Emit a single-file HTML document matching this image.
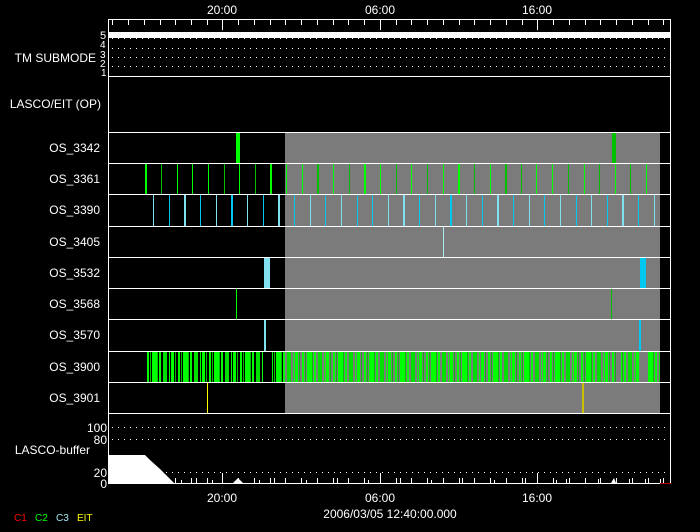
<!DOCTYPE html>
<html><head><meta charset="utf-8"><style>
html,body{margin:0;padding:0;background:#000;width:700px;height:532px;overflow:hidden}
svg{display:block}
text{font-family:"Liberation Sans",sans-serif;fill:#fff;font-size:11px}
</style></head><body>
<svg width="700" height="532" viewBox="0 0 700 532" xmlns="http://www.w3.org/2000/svg">
<defs>
<pattern id="g3900" x="147" y="0" width="31" height="10" patternUnits="userSpaceOnUse">
<rect x="0" y="0" width="2" height="10" fill="#00ff00"/>
<rect x="3" y="0" width="1" height="10" fill="#00c000"/>
<rect x="5" y="0" width="5" height="10" fill="#00ff00"/>
<rect x="10" y="0" width="1" height="10" fill="#00c000"/>
<rect x="12" y="0" width="2" height="10" fill="#00ff00"/>
<rect x="16" y="0" width="4" height="10" fill="#00e000"/>
<rect x="22" y="0" width="1" height="10" fill="#00ff00"/>
<rect x="24" y="0" width="3" height="10" fill="#00ff00"/>
<rect x="28" y="0" width="1" height="10" fill="#00c000"/>
</pattern>
</defs>

<!-- gray region -->
<rect x="285" y="132" width="375" height="281" fill="#7b7b7b"/>

<!-- submode -->
<rect x="108" y="32" width="563" height="6" fill="#fff"/>
<g stroke="#fff" stroke-width="1" stroke-dasharray="1 5">
<path d="M112 38.5H670M112 48.5H670M112 57.5H670M112 66.5H670M112 427.5H670M112 439.5H670M112 472.5H670"/>
</g>

<!-- OS_3342 -->
<rect x="236" y="132" width="4" height="31" fill="#00ff00"/>
<rect x="612" y="132" width="4" height="31" fill="#00c000"/>

<!-- OS_3361 -->
<g fill="#00ff00">
<rect x="145" y="163" width="2" height="31"/><rect x="161" y="163" width="1" height="31" fill="#00c000"/><rect x="177" y="163" width="1" height="31"/><rect x="192" y="163" width="1" height="31"/><rect x="208" y="163" width="1" height="31"/><rect x="224" y="163" width="1" height="31" fill="#00c000"/><rect x="239" y="163" width="1" height="31"/><rect x="255" y="163" width="1" height="31" fill="#00c000"/><rect x="270" y="163" width="2" height="31"/><rect x="286" y="163" width="1" height="31"/><rect x="302" y="163" width="1" height="31"/><rect x="317" y="163" width="2" height="31" fill="#00c000"/><rect x="333" y="163" width="1" height="31"/><rect x="349" y="163" width="1" height="31" fill="#00c000"/><rect x="364" y="163" width="2" height="31"/><rect x="380" y="163" width="1" height="31"/><rect x="396" y="163" width="1" height="31" fill="#00c000"/><rect x="411" y="163" width="1" height="31"/><rect x="427" y="163" width="1" height="31" fill="#00c000"/><rect x="443" y="163" width="1" height="31"/><rect x="458" y="163" width="2" height="31"/><rect x="474" y="163" width="1" height="31" fill="#00c000"/><rect x="490" y="163" width="1" height="31"/><rect x="505" y="163" width="2" height="31" fill="#00c000"/><rect x="552" y="163" width="1" height="31"/><rect x="568" y="163" width="1" height="31" fill="#00c000"/><rect x="584" y="163" width="1" height="31"/><rect x="599" y="163" width="1" height="31" fill="#00c000"/><rect x="615" y="163" width="1" height="31"/><rect x="630" y="163" width="1" height="31" fill="#00c000"/><rect x="646" y="163" width="1" height="31"/><rect x="536" y="163" width="1" height="31"/><rect x="521" y="163" width="1" height="31" fill="#00c000"/>
</g>

<!-- OS_3390 -->
<g fill="#80e0f0">
<rect x="153" y="194" width="1" height="32"/><rect x="169" y="194" width="1" height="32" fill="#00c8f0"/><rect x="184" y="194" width="2" height="32"/><rect x="200" y="194" width="1" height="32" fill="#00c8f0"/><rect x="216" y="194" width="1" height="32"/><rect x="231" y="194" width="2" height="32" fill="#00c8f0"/><rect x="247" y="194" width="1" height="32"/><rect x="263" y="194" width="1" height="32" fill="#00c8f0"/><rect x="278" y="194" width="2" height="32"/><rect x="294" y="194" width="1" height="32" fill="#00c8f0"/><rect x="310" y="194" width="1" height="32"/><rect x="325" y="194" width="1" height="32" fill="#00c8f0"/><rect x="341" y="194" width="1" height="32"/><rect x="357" y="194" width="1" height="32" fill="#00c8f0"/><rect x="403" y="194" width="2" height="32"/><rect x="419" y="194" width="1" height="32" fill="#00c8f0"/><rect x="435" y="194" width="1" height="32"/><rect x="450" y="194" width="2" height="32" fill="#00c8f0"/><rect x="466" y="194" width="1" height="32"/><rect x="482" y="194" width="1" height="32" fill="#00c8f0"/><rect x="497" y="194" width="2" height="32"/><rect x="513" y="194" width="1" height="32" fill="#00c8f0"/><rect x="529" y="194" width="1" height="32"/><rect x="544" y="194" width="1" height="32" fill="#00c8f0"/><rect x="560" y="194" width="1" height="32"/><rect x="576" y="194" width="1" height="32" fill="#00c8f0"/><rect x="591" y="194" width="1" height="32"/><rect x="607" y="194" width="1" height="32" fill="#00c8f0"/><rect x="622" y="194" width="2" height="32"/><rect x="638" y="194" width="1" height="32" fill="#00c8f0"/><rect x="654" y="194" width="1" height="32"/><rect x="372" y="194" width="1" height="32" fill="#00c8f0"/><rect x="388" y="194" width="1" height="32"/>
</g>

<!-- OS_3405 -->
<rect x="443" y="226" width="1" height="31" fill="#b0e8f0"/>
<!-- OS_3532 -->
<rect x="264" y="257" width="6" height="31" fill="#80e0f0"/>
<rect x="640" y="257" width="6" height="31" fill="#00c8f0"/>
<!-- OS_3568 -->
<rect x="236" y="288" width="1" height="31" fill="#00ff00"/>
<rect x="611" y="288" width="1" height="31" fill="#00c000"/>
<!-- OS_3570 -->
<rect x="264" y="319" width="2" height="32" fill="#80e0f0"/>
<rect x="639" y="319" width="2" height="32" fill="#00c8f0"/>
<!-- OS_3900 -->
<rect x="147" y="351" width="116" height="31" fill="url(#g3900)"/>
<rect x="272" y="351" width="345" height="31" fill="url(#g3900)"/>
<rect x="621" y="351" width="18" height="31" fill="url(#g3900)"/>
<rect x="648" y="351" width="12" height="31" fill="url(#g3900)"/>
<!-- OS_3901 -->
<rect x="207" y="382" width="1" height="31" fill="#ffff00"/>
<rect x="582" y="382" width="2" height="31" fill="#c8c000"/>

<!-- row lines -->
<g fill="#fff">
<rect x="108" y="76" width="563" height="1"/>
<rect x="108" y="132" width="563" height="1"/>
<rect x="108" y="163" width="563" height="1"/>
<rect x="108" y="194" width="563" height="1"/>
<rect x="108" y="226" width="563" height="1"/>
<rect x="108" y="257" width="563" height="1"/>
<rect x="108" y="288" width="563" height="1"/>
<rect x="108" y="319" width="563" height="1"/>
<rect x="108" y="351" width="563" height="1"/>
<rect x="108" y="382" width="563" height="1"/>
<rect x="108" y="413" width="563" height="1"/>
<rect x="108" y="19" width="563" height="1"/>
<rect x="108" y="19" width="1" height="465"/>
<rect x="670" y="19" width="1" height="465"/>
<rect x="108" y="483" width="563" height="1"/>
</g>

<!-- buffer -->
<polygon points="109,455 145,455 150,460 160,469 168,477 174,483 109,483" fill="#fff"/>
<polygon points="233,483 238,478 243,483" fill="#fff"/>
<polygon points="611,483 614,478 616,483" fill="#fff"/>
<g fill="#fff">
<rect x="150" y="478" width="1" height="5"/><rect x="165" y="480" width="1" height="3"/><rect x="181" y="480" width="1" height="3"/><rect x="196" y="478" width="1" height="5"/><rect x="212" y="480" width="1" height="3"/><rect x="222" y="473" width="1" height="10"/><rect x="259" y="480" width="1" height="3"/><rect x="274" y="478" width="1" height="5"/><rect x="306" y="480" width="1" height="3"/><rect x="337" y="478" width="1" height="5"/><rect x="368" y="480" width="1" height="3"/><rect x="400" y="478" width="1" height="5"/><rect x="431" y="480" width="1" height="3"/><rect x="462" y="478" width="1" height="5"/><rect x="494" y="480" width="1" height="3"/><rect x="525" y="478" width="1" height="5"/><rect x="556" y="480" width="1" height="3"/><rect x="566" y="479" width="1" height="4"/><rect x="598" y="479" width="1" height="4"/><rect x="629" y="479" width="1" height="4"/><rect x="645" y="479" width="1" height="4"/><rect x="660" y="479" width="1" height="4"/>
</g>
<rect x="660" y="483" width="11" height="1" fill="#c00000"/>

<!-- ticks -->
<g stroke="#fff" stroke-width="1">
<path d="M112.5 20v5M128.5 20v5M144.5 20v5M160.5 20v5M175.5 20v5M191.5 20v5M207.5 20v5M222.5 20v10M238.5 20v5M254.5 20v5M270.5 20v5M285.5 20v5M301.5 20v5M317.5 20v5M333.5 20v5M348.5 20v5M364.5 20v5M380.5 20v10M396.5 20v5M411.5 20v5M427.5 20v5M443.5 20v5M459.5 20v5M474.5 20v5M490.5 20v5M506.5 20v5M522.5 20v5M537.5 20v10M553.5 20v5M569.5 20v5M585.5 20v5M600.5 20v5M616.5 20v5M632.5 20v5M648.5 20v5M663.5 20v5"/>
<path d="M112.5 483v-5M128.5 483v-5M144.5 483v-5M160.5 483v-5M175.5 483v-5M191.5 483v-5M207.5 483v-5M222.5 483v-10M238.5 483v-5M254.5 483v-5M270.5 483v-5M285.5 483v-5M301.5 483v-5M317.5 483v-5M333.5 483v-5M348.5 483v-5M364.5 483v-5M380.5 483v-10M396.5 483v-5M411.5 483v-5M427.5 483v-5M443.5 483v-5M459.5 483v-5M474.5 483v-5M490.5 483v-5M506.5 483v-5M522.5 483v-5M537.5 483v-10M553.5 483v-5M569.5 483v-5M585.5 483v-5M600.5 483v-5M616.5 483v-5M632.5 483v-5M648.5 483v-5M663.5 483v-5"/>
</g>

<!-- labels -->
<text x="222" y="14" text-anchor="middle" style="font-size:12px">20:00</text>
<text x="380" y="14" text-anchor="middle" style="font-size:12px">06:00</text>
<text x="537" y="14" text-anchor="middle" style="font-size:12px">16:00</text>
<text x="100" y="39" style="font-size:11px">5</text><text x="100" y="48" style="font-size:10px">4</text><text x="100" y="58" style="font-size:10px">3</text><text x="100" y="67" style="font-size:10px">2</text><text x="101" y="76" style="font-size:10px">1</text>
<text x="96" y="62" text-anchor="end" style="font-size:12px">TM SUBMODE</text>
<text x="101" y="108" text-anchor="end" style="font-size:12px">LASCO/EIT (OP)</text>
<text x="100" y="152" text-anchor="end" style="font-size:12px">OS_3342</text>
<text x="100" y="183" text-anchor="end" style="font-size:12px">OS_3361</text>
<text x="100" y="214" text-anchor="end" style="font-size:12px">OS_3390</text>
<text x="100" y="246" text-anchor="end" style="font-size:12px">OS_3405</text>
<text x="100" y="277" text-anchor="end" style="font-size:12px">OS_3532</text>
<text x="100" y="308" text-anchor="end" style="font-size:12px">OS_3568</text>
<text x="100" y="339" text-anchor="end" style="font-size:12px">OS_3570</text>
<text x="100" y="371" text-anchor="end" style="font-size:12px">OS_3900</text>
<text x="100" y="402" text-anchor="end" style="font-size:12px">OS_3901</text>
<text x="107" y="432" text-anchor="end" style="font-size:12px">100</text>
<text x="107" y="444" text-anchor="end" style="font-size:12px">80</text>
<text x="90" y="454" text-anchor="end" style="font-size:12px">LASCO-buffer</text>
<text x="107" y="477" text-anchor="end" style="font-size:12px">20</text>
<text x="107" y="488" text-anchor="end" style="font-size:12px">0</text>
<text x="222" y="502" text-anchor="middle" style="font-size:12px">20:00</text>
<text x="380" y="502" text-anchor="middle" style="font-size:12px">06:00</text>
<text x="537" y="502" text-anchor="middle" style="font-size:12px">16:00</text>
<text x="390" y="518" text-anchor="middle" style="font-size:12px">2006/03/05 12:40:00.000</text>
<text x="14" y="521" style="fill:#ff0000;font-size:10px">C1</text>
<text x="35" y="521" style="fill:#00ff00;font-size:10px">C2</text>
<text x="56" y="521" style="fill:#a0e8f0;font-size:10px">C3</text>
<text x="77" y="521" style="fill:#ffff00;font-size:10px">EIT</text>
</svg>
</body></html>
